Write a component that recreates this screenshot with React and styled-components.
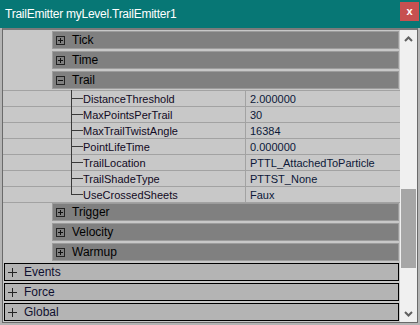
import React from "react";
import styled, { createGlobalStyle } from "styled-components";

const GlobalStyle = createGlobalStyle`
    html, body {
        margin: 0;
        padding: 0;
        background: #f0f0f0;
    }
    body {
        font-family: "Liberation Sans", Arial, sans-serif;
    }
`;

const Window = styled.div`
    width: 420px;
    height: 325px;
    display: flex;
    flex-direction: column;
    overflow: hidden;
`;

const TitleBar = styled.div`
    height: 28px;
    flex: none;
    background: #077775;
    display: flex;
    align-items: center;
    padding-left: 5px;
    padding-right: 1px;
    box-sizing: border-box;
    color: #fff;
    font-size: 12px;
    letter-spacing: -0.25px;
`;

const Title = styled.span`
    flex: 1;
    padding-bottom: 1px;
`;

const CloseButton = styled.div`
    width: 19px;
    height: 19px;
    margin-top: -5px;
    background: #c75050;
    color: #fff;
    font: bold 11px "Liberation Sans", Arial, sans-serif;
    letter-spacing: 0;
    display: flex;
    align-items: center;
    justify-content: center;
    padding-bottom: 1px;
    box-sizing: border-box;
`;

const Frame = styled.div`
    flex: 1;
    display: flex;
    border: 2px solid #b4b4b4;
    border-top: none;
    min-height: 0;
`;

const Inner = styled.div`
    flex: 1;
    display: flex;
    border: 1px solid #6a6a6a;
    border-top: 2px solid #7a7a7a;
    min-height: 0;
`;

const Content = styled.div`
    flex: 1;
    background: #c8c8c8;
    overflow: hidden;
    font-size: 11px;
`;

const CatRow = styled.div`
    height: 18px;
    box-sizing: border-box;
    margin: 1px 1px 2px 49px;
    background: #808080;
    border: 1px solid #9c9c9c;
    display: flex;
    align-items: center;
    padding-left: 3px;
    color: #000;
    font-size: 12px;
`;

const TopRow = styled.div`
    height: 18px;
    box-sizing: border-box;
    margin: 1px 1px 2px 1px;
    background: #b4b4b4;
    border: 1px solid #000;
    display: flex;
    align-items: center;
    padding-left: 2px;
    color: #101030;
    font-size: 12px;
`;

const Box = styled.span`
    width: 9px;
    height: 9px;
    box-sizing: border-box;
    border: 1px solid #222;
    position: relative;
    margin-right: 7px;
    flex: none;

    &::before {
        content: "";
        position: absolute;
        left: 1px;
        right: 1px;
        top: 3px;
        height: 1px;
        background: #111;
    }
    &::after {
        content: "";
        position: absolute;
        top: 1px;
        bottom: 1px;
        left: 3px;
        width: 1px;
        background: #111;
        display: ${(p) => (p.open ? "none" : "block")};
    }
`;

const Plus = styled.span`
    width: 9px;
    height: 9px;
    position: relative;
    margin-left: 1px;
    margin-right: 7px;
    flex: none;

    &::before {
        content: "";
        position: absolute;
        left: 0;
        right: 0;
        top: 4px;
        height: 1px;
        background: #222;
    }
    &::after {
        content: "";
        position: absolute;
        top: 0;
        bottom: 0;
        left: 4px;
        width: 1px;
        background: #222;
    }
`;

const PropList = styled.div`
    border-top: 1px solid #a2a2a2;
    margin: -1px 0 -1px 0;
`;

const PropRow = styled.div`
    display: flex;
    height: 16px;
    box-sizing: border-box;
    border-bottom: 1px solid #a2a2a2;
`;

const NameCell = styled.div`
    width: 242px;
    flex: none;
    display: flex;
    align-items: center;
    border-right: 1px solid #a2a2a2;
    color: #120a24;
`;

const Gutter = styled.span`
    width: 12px;
    height: 16px;
    margin-left: 68px;
    margin-bottom: -1px;
    flex: none;
    position: relative;

    &::before {
        content: "";
        position: absolute;
        left: 0;
        top: -1px;
        width: 1px;
        height: ${(p) => (p.last ? "9px" : "17px")};
        background: #3a3a3a;
    }
    &::after {
        content: "";
        position: absolute;
        left: 0;
        top: 7px;
        width: 12px;
        height: 1px;
        background: #3a3a3a;
    }
`;

const ValueCell = styled.div`
    flex: 1;
    display: flex;
    align-items: center;
    padding-left: 4px;
    color: #0c1838;
`;

const Scrollbar = styled.div`
    width: 17px;
    flex: none;
    background: #f0f0f0;
    display: flex;
    flex-direction: column;
`;

const Arrow = styled.div`
    height: 17px;
    flex: none;
    display: flex;
    align-items: center;
    justify-content: center;
`;

const Track = styled.div`
    flex: 1;
    padding-top: 142px;
`;

const Thumb = styled.div`
    width: 15px;
    height: 79px;
    margin-left: 1px;
    background: #a6a6a6;
`;

const Chevron = ({ up }) => (
    <svg width="9" height="6" viewBox="0 0 9 6">
        <path
            d={up ? "M1 5 L4.5 1.5 L8 5" : "M1 1 L4.5 4.5 L8 1"}
            fill="none"
            stroke="#606060"
            strokeWidth="2"
        />
    </svg>
);

const props = [
    ["DistanceThreshold", "2.000000"],
    ["MaxPointsPerTrail", "30"],
    ["MaxTrailTwistAngle", "16384"],
    ["PointLifeTime", "0.000000"],
    ["TrailLocation", "PTTL_AttachedToParticle"],
    ["TrailShadeType", "PTTST_None"],
    ["UseCrossedSheets", "Faux"],
];

const App = () => {
    return (
        <Window>
            <GlobalStyle />
            <TitleBar>
                <Title>TrailEmitter myLevel.TrailEmitter1</Title>
                <CloseButton>x</CloseButton>
            </TitleBar>
            <Frame>
                <Inner>
                    <Content>
                        {["Tick", "Time"].map((name) => (
                            <CatRow key={name}>
                                <Box />
                                {name}
                            </CatRow>
                        ))}
                        <CatRow>
                            <Box open />
                            Trail
                        </CatRow>
                        <PropList>
                            {props.map(([name, value], i) => (
                                <PropRow key={name}>
                                    <NameCell>
                                        <Gutter last={i === props.length - 1} />
                                        {name}
                                    </NameCell>
                                    <ValueCell>{value}</ValueCell>
                                </PropRow>
                            ))}
                        </PropList>
                        {["Trigger", "Velocity", "Warmup"].map((name) => (
                            <CatRow key={name}>
                                <Box />
                                {name}
                            </CatRow>
                        ))}
                        {["Events", "Force", "Global"].map((name) => (
                            <TopRow key={name}>
                                <Plus />
                                {name}
                            </TopRow>
                        ))}
                    </Content>
                    <Scrollbar>
                        <Arrow>
                            <Chevron up />
                        </Arrow>
                        <Track>
                            <Thumb />
                        </Track>
                        <Arrow>
                            <Chevron />
                        </Arrow>
                    </Scrollbar>
                </Inner>
            </Frame>
        </Window>
    );
};

export default App;
